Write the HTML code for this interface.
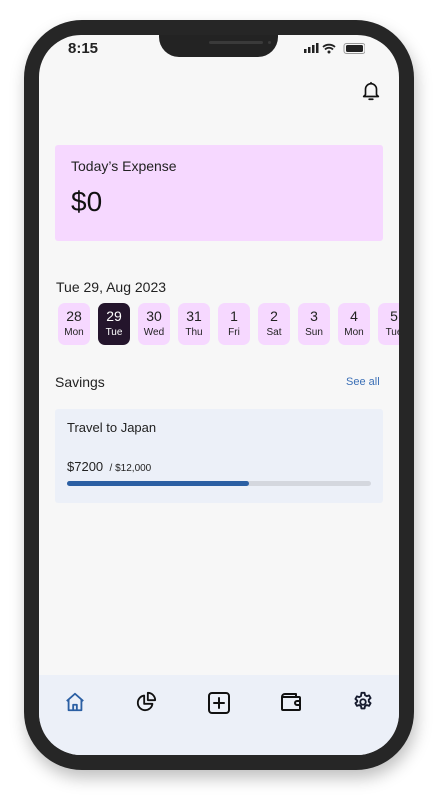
<!DOCTYPE html>
<html><head><style>
*{margin:0;padding:0;box-sizing:border-box}
body{width:438px;height:798px;background:#fff;font-family:"Liberation Sans",sans-serif;position:relative;overflow:hidden}
.frame{position:absolute;left:24px;top:20px;width:390px;height:750px;border-radius:58px;background:#262626;box-shadow:2px 8px 16px rgba(0,0,0,.25)}
.screen{position:absolute;left:39px;top:35px;width:360px;height:720px;border-radius:42px;background:#f7f7f7;overflow:hidden}
.notch{position:absolute;left:120px;top:0;width:119px;height:22px;background:#232323;border-radius:0 0 20px 20px}
.abs{position:absolute}
.day{position:absolute;top:268px;width:32px;height:42px;border-radius:7px;background:#f6d8ff;text-align:center;color:#222}
.day b{display:block;font-weight:normal;font-size:14px;margin-top:5px}
.day i{display:block;font-style:normal;font-size:10px;margin-top:3px}
.tab{position:absolute;left:0;top:640px;width:360px;height:80px;background:#ecf0f8}
</style></head><body>
<div class="frame"></div>
<div class="screen">
<div class="notch"><div class="abs" style="left:50px;top:6px;width:54px;height:3px;border-radius:2px;background:#3a3a3a"></div><div class="abs" style="left:109px;top:6px;width:3px;height:3px;border-radius:50%;background:#3a3a3a"></div></div>
<div class="abs" style="left:29px;top:5px;font-size:15px;font-weight:bold;color:#222">8:15</div>
<svg class="abs" style="left:264px;top:7px" width="62" height="12" viewBox="0 0 62 12"><rect x="1" y="7" width="2.5" height="4" fill="#222"/><rect x="5" y="5" width="2.5" height="6" fill="#222"/><rect x="9" y="3" width="2.5" height="8" fill="#222"/><rect x="13" y="1" width="2.5" height="10" fill="#222"/><path d="M20 5a9 9 0 0 1 12 0M22 7.5a5.5 5.5 0 0 1 8 0" stroke="#222" stroke-width="1.8" fill="none"/><circle cx="26" cy="10" r="1.5" fill="#222"/><rect x="41" y="1.5" width="21" height="10" rx="2.5" fill="none" stroke="#999"/><rect x="43" y="3" width="17" height="7" rx="1.5" fill="#222"/></svg>
<svg class="abs" style="left:321px;top:45px" width="22" height="22" viewBox="0 0 24 24" fill="none" stroke="#111" stroke-width="1.8" stroke-linecap="round" stroke-linejoin="round"><path d="M6 16V10a6 6 0 0 1 12 0v6l2 2H4z"/><path d="M10 21h4"/><path d="M12 3v1"/></svg>
<div class="abs" style="left:16px;top:110px;width:328px;height:96px;background:#f6d8ff;border-radius:3px"></div>
<div class="abs" style="left:32px;top:123px;font-size:14px;color:#222">Today’s Expense</div>
<div class="abs" style="left:32px;top:151px;font-size:28px;color:#111">$0</div>
<div class="abs" style="left:17px;top:244px;font-size:14px;color:#222">Tue 29, Aug 2023</div>
<div class="day" style="left:19px"><b>28</b><i>Mon</i></div>
<div class="day" style="left:59px;background:#24152c;color:#fff"><b>29</b><i>Tue</i></div>
<div class="day" style="left:99px"><b>30</b><i>Wed</i></div>
<div class="day" style="left:139px"><b>31</b><i>Thu</i></div>
<div class="day" style="left:179px"><b>1</b><i>Fri</i></div>
<div class="day" style="left:219px"><b>2</b><i>Sat</i></div>
<div class="day" style="left:259px"><b>3</b><i>Sun</i></div>
<div class="day" style="left:299px"><b>4</b><i>Mon</i></div>
<div class="day" style="left:339px"><b>5</b><i>Tue</i></div>
<div class="abs" style="left:16px;top:339px;font-size:14px;color:#222">Savings</div>
<div class="abs" style="left:307px;top:341px;font-size:11px;color:#3b6fb6">See all</div>
<div class="abs" style="left:16px;top:374px;width:328px;height:94px;background:#ecf0f8;border-radius:3px"></div>
<div class="abs" style="left:28px;top:385px;font-size:13px;color:#222">Travel to Japan</div>
<div class="abs" style="left:28px;top:424px;font-size:13px;color:#222">$7200 <span style="font-size:10px">&nbsp;/ $12,000</span></div>
<div class="abs" style="left:28px;top:446px;width:304px;height:5px;border-radius:3px;background:#d4d7de"></div>
<div class="abs" style="left:28px;top:446px;width:182px;height:5px;border-radius:3px;background:#2b5fa3"></div>
<div class="tab">
<svg class="abs" style="left:25px;top:56px;position:absolute;top:16px" width="22" height="22" viewBox="0 0 24 24" fill="none" stroke="#2b5fa3" stroke-width="2" stroke-linejoin="round"><path d="M3 11L12 3l9 8M5 9.5V21h14V9.5"/><path d="M10 21v-6h4v6"/></svg>
<svg class="abs" style="left:96px;top:16px" width="22" height="22" viewBox="0 0 24 24" fill="none" stroke="#111" stroke-width="2" stroke-linejoin="round"><path d="M10 5a8 8 0 1 0 9 9h-9z"/><path d="M14 2v8h8a8 8 0 0 0-8-8z"/></svg>
<svg class="abs" style="left:168px;top:16px" width="24" height="24" viewBox="0 0 24 24" fill="none" stroke="#111" stroke-width="2" stroke-linecap="round"><rect x="2" y="2" width="20" height="20" rx="3"/><path d="M12 7v10M7 12h10"/></svg>
<svg class="abs" style="left:241px;top:17px" width="22" height="20" viewBox="0 0 22 20" fill="none" stroke="#111" stroke-width="2" stroke-linejoin="round"><path d="M2 5V17a1 1 0 0 0 1 1h16a1 1 0 0 0 1-1V13M20 9V6a1 1 0 0 0-1-1H3M2 5a3 3 0 0 1 3-3h11v3"/><path d="M20 9h-3a2 2 0 0 0 0 4h3z"/></svg>
<svg class="abs" style="left:313px;top:16px" width="22" height="22" viewBox="0 0 24 24" fill="none" stroke="#161b2e" stroke-width="2" stroke-linejoin="round"><path d="M10.3 2h3.4l.5 2.6 1.9 1.1 2.5-.9 1.7 2.9-2 1.7v2.2l2 1.7-1.7 2.9-2.5-.9-1.9 1.1-.5 2.6h-3.4l-.5-2.6-1.9-1.1-2.5.9-1.7-2.9 2-1.7V10.4l-2-1.7 1.7-2.9 2.5.9 1.9-1.1z"/><circle cx="12" cy="12" r="3"/></svg>
</div>
</div>
</body></html>
